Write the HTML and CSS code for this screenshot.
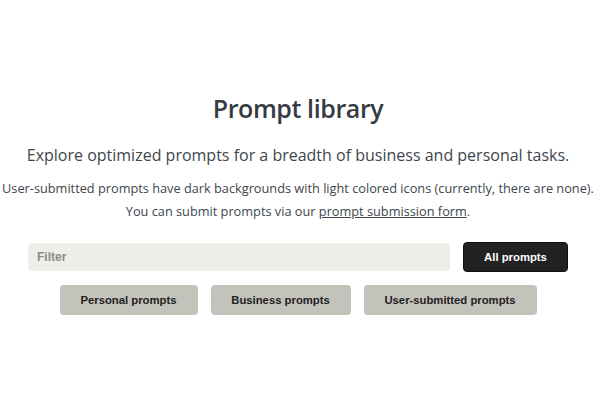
FILE: index.html
```html
<!DOCTYPE html>
<html>
<head>
<meta charset="utf-8">
<link rel="stylesheet" href="styles.css">
</head>
<body>
<main class="page">
  <h1 class="title">Prompt library</h1>
  <p class="lead">Explore optimized prompts for a breadth of business and personal tasks.</p>
  <p class="note">User-submitted prompts have dark backgrounds with light colored icons (currently, there are none).<br>You can submit prompts via our <a class="link" href="#">prompt submission form</a>.</p>
  <div class="filter-row">
    <input class="filter" type="text" placeholder="Filter">
    <button class="btn btn-dark">All prompts</button>
  </div>
  <div class="tag-row">
    <button class="btn btn-light">Personal prompts</button>
    <button class="btn btn-light">Business prompts</button>
    <button class="btn btn-light">User-submitted prompts</button>
  </div>
</main>
</body>
</html>
```
FILE: styles.css
```css
* { box-sizing: border-box; }
html, body { margin: 0; padding: 0; background: #fff; }
body { font-family: "Open Sans", "Noto Sans", sans-serif; color: #3b4046; }
.page {
  width: 600px;
  padding: 90px 4px 0 0;
  display: flex;
  flex-direction: column;
  align-items: center;
}
.title {
  margin: 0;
  font-size: 25px;
  font-weight: 600;
  letter-spacing: -0.4px;
  line-height: 36px;
  color: #353b41;
}
.lead {
  margin: 17px 0 0;
  font-size: 16px;
  line-height: 24px;
  color: #40464c;
}
.note {
  margin: 10px 0 0;
  font-size: 12.75px;
  line-height: 23px;
  text-align: center;
  white-space: nowrap;
  color: #40464c;
}
.link { color: #40464c; text-decoration: underline; }
.filter-row {
  margin-top: 19px;
  width: 540px;
  display: flex;
  gap: 13px;
  align-items: center;
}
.filter {
  flex: 1;
  height: 28px;
  border: none;
  border-radius: 4px;
  background: #eeeee8;
  padding: 0 9px;
  font-family: "Liberation Sans", Arial, sans-serif;
  font-weight: bold;
  font-size: 12px;
  outline: none;
}
.filter::placeholder { color: #8a8a86; }
.btn {
  height: 30px;
  border-radius: 4px;
  font-family: "Liberation Sans", Arial, sans-serif;
  font-weight: bold;
  font-size: 11.3px;
  padding: 0;
  white-space: nowrap;
  cursor: pointer;
}
.btn-dark {
  width: 105px;
  background: #222222;
  color: #fff;
  border: 1px solid #111;
}
.btn-light {
  background: #c4c3bb;
  color: #222;
  border: none;
}
.tag-row {
  margin-top: 13px;
  display: flex;
  gap: 13px;
  justify-content: center;
}
.tag-row .btn:nth-child(1) { width: 138px; }
.tag-row .btn:nth-child(2) { width: 140px; }
.tag-row .btn:nth-child(3) { width: 173px; }
```
